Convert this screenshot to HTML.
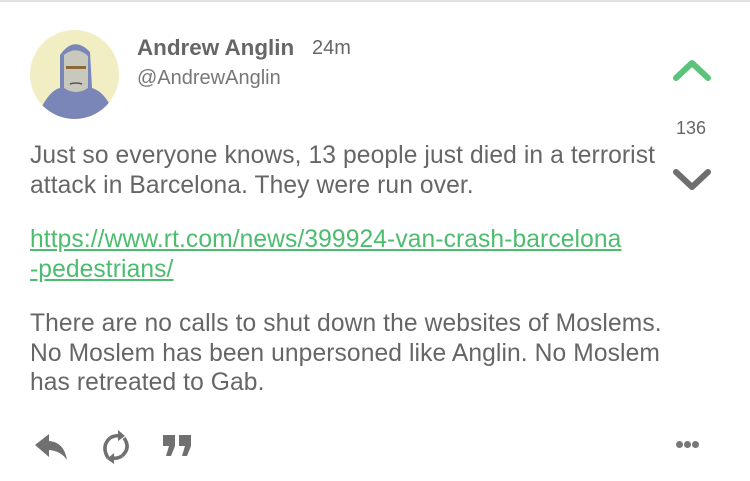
<!DOCTYPE html>
<html><head><meta charset="utf-8"><style>
body{margin:0;width:750px;height:481px;background:#fff;font-family:"Liberation Sans",Arial,sans-serif;position:relative;overflow:hidden}
.top{position:absolute;left:0;top:0;width:750px;height:2px;background:#e2e2e2}
.av{position:absolute;left:30px;top:30px;width:89px;height:89px;border-radius:50%;overflow:hidden;background:#f1eec4}
.name{position:absolute;left:137px;top:35px;font-size:22.4px;font-weight:bold;color:#666}
.time{position:absolute;left:312px;top:37px;font-size:20px;color:#666}
.handle{position:absolute;left:137px;top:67px;font-size:20px;color:#777}
.body{position:absolute;left:30px;top:141px;width:670px;font-size:24.6px;line-height:29.5px;color:#666;letter-spacing:0.1px}
.body p{margin:0 0 25px}
a{color:#4cbc6e;text-decoration:underline}
.cnt{position:absolute;left:676px;top:118px;font-size:18px;color:#666}
.dots{position:absolute;left:676px;top:435px}
.dots i{display:inline-block;width:7px;height:7px;border-radius:50%;background:#777;margin-right:1px}
</style></head><body>
<div class="top"></div>
<div class="av"><svg width="89" height="89" viewBox="0 0 89 89">
<path d="M10 80 Q20 60 30 58 L30 25 Q44 5 60 22 L62 58 Q75 62 82 80 L89 89 L0 89Z" fill="#7a86b8"/>
<path d="M34 25 Q46 15 58 26 L58 58 Q46 66 34 58Z" fill="#c9c8bd"/>
<rect x="36" y="36" width="20" height="3" fill="#8a6a3a"/>
<path d="M40 54 Q46 52 52 54" stroke="#555" fill="none" stroke-width="1.5"/>
</svg></div>
<div class="name">Andrew Anglin</div>
<div class="time">24m</div>
<div class="handle">@AndrewAnglin</div>
<svg style="position:absolute;left:672px;top:58px" width="40" height="26"><path d="M4 20 L20 5 L36 20" stroke="#5cc47a" stroke-width="6" fill="none" stroke-linecap="round" stroke-linejoin="round"/></svg>
<div class="cnt">136</div>
<svg style="position:absolute;left:672px;top:167px" width="40" height="26"><path d="M4 5 L20 20 L36 5" stroke="#6f6f6f" stroke-width="6" fill="none" stroke-linecap="round" stroke-linejoin="round"/></svg>
<div class="body">
<p>Just so everyone knows, 13 people just died in a terrorist<br>attack in Barcelona. They were run over.</p>
<p><a>https://www.rt.com/news/399924-van-crash-barcelona<br>-pedestrians/</a></p>
<p>There are no calls to shut down the websites of Moslems.<br>No Moslem has been unpersoned like Anglin. No Moslem<br>has retreated to Gab.</p>
</div>
<svg style="position:absolute;left:34px;top:432px" width="36" height="30"><path d="M1 13 L15 2 L15 9 Q30 10 33 28 Q27 19 15 18 L15 25Z" fill="#707070"/></svg>
<svg style="position:absolute;left:98px;top:426px" width="36" height="42"><g stroke="#707070" stroke-width="3.5" fill="none"><path d="M12 12 Q3 20 10 32"/><path d="M12 12 Q17 9 22 10"/><path d="M24 30 Q33 22 26 12"/><path d="M24 30 Q19 33 14 32"/></g><path d="M20 4 L27 10 L20 15Z M16 27 L9 33 L16 38Z" fill="#707070"/></svg>
<svg style="position:absolute;left:163px;top:435px" width="30" height="22"><path d="M0 0 H12 V11 L8 21 H3 L6 11 H0Z M16 0 H28 V11 L24 21 H19 L22 11 H16Z" fill="#707070"/></svg>
<div class="dots"><i></i><i></i><i></i></div>
</body></html>
